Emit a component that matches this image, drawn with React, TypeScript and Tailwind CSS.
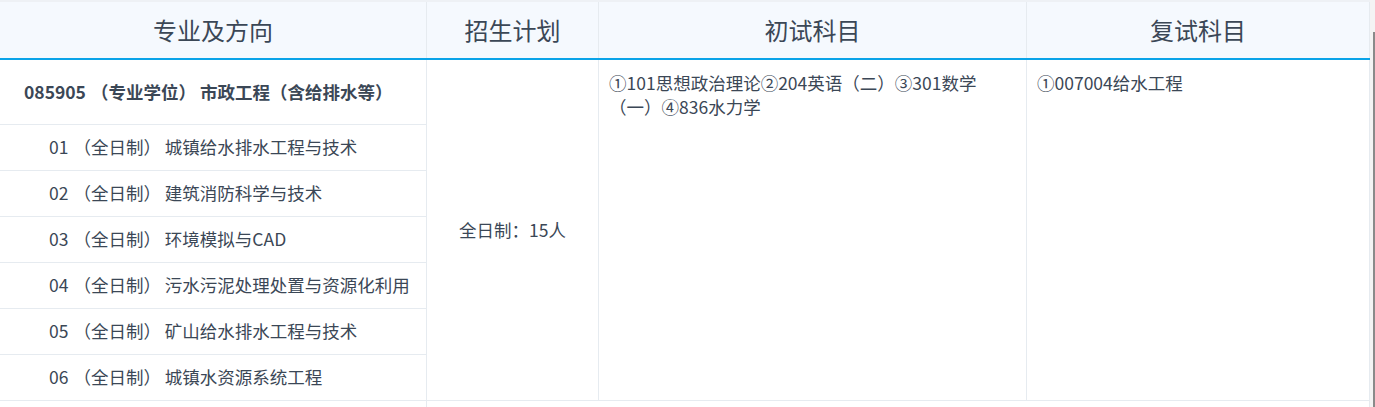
const font = { fontFamily: '"Noto Sans CJK SC", "Noto Sans", sans-serif' };

const directions = [
  { code: "01", name: "城镇给水排水工程与技术" },
  { code: "02", name: "建筑消防科学与技术" },
  { code: "03", name: "环境模拟与CAD" },
  { code: "04", name: "污水污泥处理处置与资源化利用" },
  { code: "05", name: "矿山给水排水工程与技术" },
  { code: "06", name: "城镇水资源系统工程" },
];

const headers = [
  { label: "专业及方向", w: "w-[427px]" },
  { label: "招生计划", w: "w-[172px]" },
  { label: "初试科目", w: "w-[428px]" },
  { label: "复试科目", w: "flex-1" },
];

export default function App() {
  return (
    <div
      className="flex w-[1375px] h-[407px] overflow-hidden bg-white text-[#3b4756]"
      style={font}
    >
      <div className="w-[1370px]">
        <div className="h-[2px] bg-[#eef1f5]" />

        {/* header */}
        <div className="flex h-[58px] bg-[#f5f9fe] border-b-2 border-[#0aa3e8]">
          {headers.map((h) => (
            <div
              key={h.label}
              className={`${h.w} flex items-center justify-center border-r border-[#e6ebf0] text-[24px]`}
            >
              {h.label}
            </div>
          ))}
        </div>

        {/* body */}
        <div className="flex">
          <div className="w-[427px] border-r border-[#e6ebf0]">
            <div className="h-[65px] flex items-center pl-[24px] border-b border-[#e6ebf0] text-[17.5px] font-bold whitespace-nowrap">
              <span className="mr-[5px]">085905</span> （专业学位） 市政工程（含给排水等）
            </div>
            {directions.map((d) => (
              <div
                key={d.code}
                className="h-[46px] flex items-center pl-[49px] border-b border-[#e6ebf0] text-[17.5px] whitespace-nowrap"
              >
                <span className="mr-[5px]">{d.code}</span> （全日制） {d.name}
              </div>
            ))}
          </div>

          <div className="w-[172px] h-[341px] flex items-center justify-center border-r border-b border-[#e6ebf0] text-[17.5px]">
            全日制：15人
          </div>

          <div className="w-[428px] h-[341px] px-[10px] pt-[11px] border-r border-b border-[#e6ebf0] text-[17.5px] leading-[24px]">
            ①101思想政治理论②204英语（二）③301数学（一）④836水力学
          </div>

          <div className="flex-1 h-[341px] px-[10px] pt-[11px] border-r border-b border-[#e6ebf0] text-[17.5px] leading-[24px]">
            ①007004给水工程
          </div>
        </div>

        {/* next row, cut off */}
        <div className="flex h-[46px]">
          <div className="w-[427px] border-r border-[#e6ebf0]" />
          <div className="flex-1 border-r border-[#e6ebf0]" />
        </div>
      </div>

      {/* scrollbar strip */}
      <div className="flex w-[5px] bg-[#f4f4f4]">
        <div className="w-[3px]" />
        <div className="flex flex-col w-[2px]">
          <div className="h-[32px]" />
          <div className="flex-1 bg-[#8a8a8a]" />
        </div>
      </div>
    </div>
  );
}
